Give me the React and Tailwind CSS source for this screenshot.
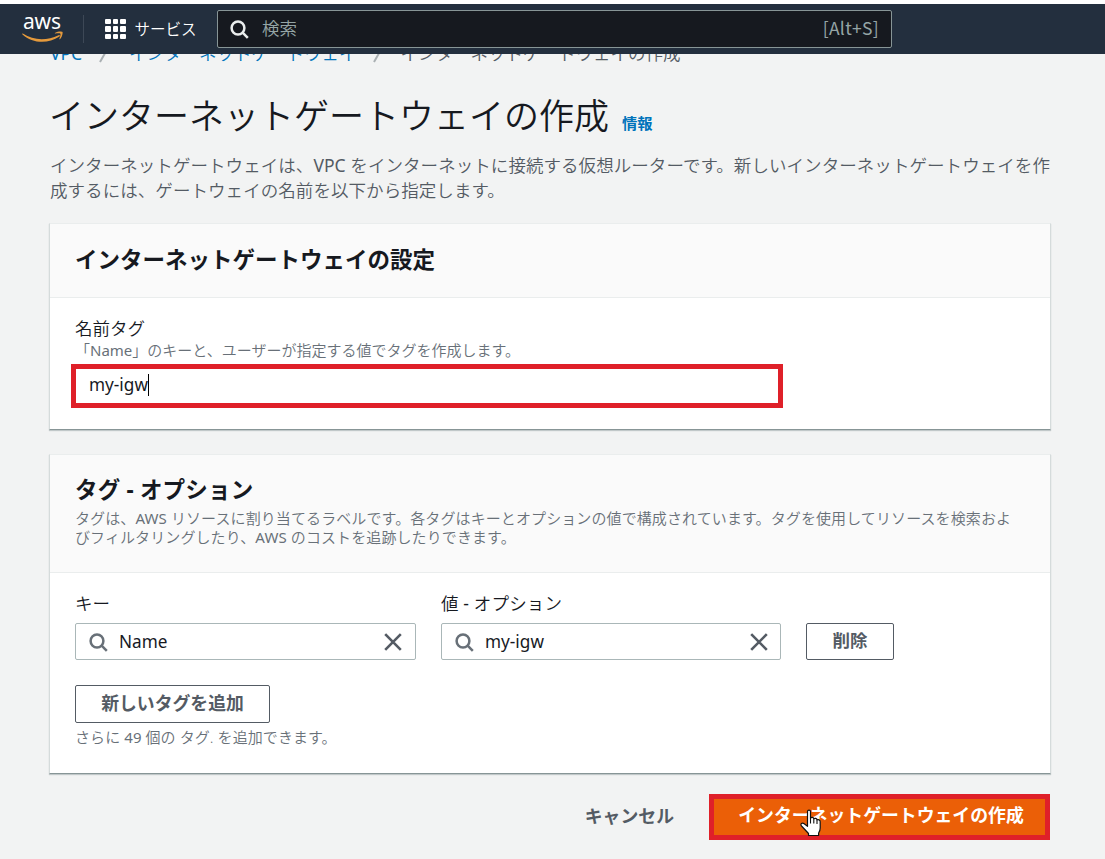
import React from "react";

function SearchIcon({ className }) {
  return (
    <svg className={className} width="19" height="19" viewBox="0 0 19 19" fill="none" stroke="currentColor" strokeWidth="2.5">
      <circle cx="8" cy="8" r="6.4" />
      <path d="M12.4 12.4L17.8 17.8" />
    </svg>
  );
}

function CloseIcon() {
  return (
    <svg className="text-[#545b64]" width="18" height="18" viewBox="0 0 18 18" fill="none" stroke="currentColor" strokeWidth="2.6">
      <path d="M1.2 1.2L16.8 16.8M16.8 1.2L1.2 16.8" />
    </svg>
  );
}

function AwsLogo() {
  return (
    <div className="relative mt-[8px] h-[32px] w-[42px]">
      <div className="h-[20px] pl-[1px] text-[21px] leading-[18px] font-normal tracking-[-0.2px] text-white">aws</div>
      <svg className="absolute top-[19px] left-0" width="42" height="13" viewBox="0 0 42 13" fill="none">
        <path d="M0.8 2.6C12 9.800 25 9.600 36.6 4.2C37.8 3.8 38.4 4.8 37.4 5.6C26 13.2 10.500 12.600 0.500 3.500C0 2.900 0.300 2.300 0.800 2.600Z" fill="#e59a3c" />
        <path d="M33 2C36 0.200 40 0.400 40.500 1.100C41 2.200 40 6.600 37.900 8.200C37.400 8.500 37.200 8.200 37.400 7.700C38.200 5.800 38.800 3.500 38.400 2.800C37.900 2.100 35.500 2.300 33.400 2.600C32.800 2.700 32.600 2.300 33 2Z" fill="#e59a3c" />
      </svg>
    </div>
  );
}

function GridIcon() {
  return (
    <div className="grid grid-cols-3 gap-[2px]">
      {Array.from({ length: 9 }, (_, i) => (
        <span key={i} className="size-[5.5px] rounded-[1px] bg-white" />
      ))}
    </div>
  );
}

function Nav() {
  return (
    <header className="flex h-[50px] bg-[#232f3e] text-white">
      <div className="flex w-[83px] pl-[22px]">
        <AwsLogo />
      </div>
      <div className="mt-[11px] h-[28px] w-px bg-[#3d4856]" />
      <div className="flex items-center pl-[21px]">
        <GridIcon />
        <span className="mt-px ml-[9px] w-[82.5px] text-[15.5px] font-[350] whitespace-nowrap">サービス</span>
      </div>
      <div className="mt-[6px] flex h-[38px] w-[675px] items-center rounded-[2px] border border-[#879596] bg-[#16191f] pr-[12px] pb-[2px] pl-[12px] text-[17.5px] text-[#95a5a6]">
        <SearchIcon className="mt-[2px] text-[#eaeded]" />
        <span className="ml-[13px] font-[350]">検索</span>
        <span className="ml-auto font-['Noto_Sans_CJK_JP',sans-serif] tracking-[0.3px]">[Alt+S]</span>
      </div>
    </header>
  );
}

function Slash({ className }) {
  return (
    <svg className={className} width="10" height="16" viewBox="0 0 10 16" fill="none" stroke="#aab0b3" strokeWidth="2">
      <path d="M9 1L1 15" />
    </svg>
  );
}

function Breadcrumbs() {
  return (
    <div className="h-[42px] overflow-hidden">
      <div className="mt-[-13px] flex h-[25px] items-center text-[17.5px] leading-[25px] font-[350] whitespace-nowrap text-[#0073bb]">
        <span className="w-[32px] font-normal">VPC</span>
        <Slash className="mt-[2px] mr-[20px] ml-[17px]" />
        <span>インターネットゲートウェイ</span>
        <Slash className="mt-[2px] mr-[18px] ml-[16px]" />
        <span className="text-[#545b64]">インターネットゲートウェイの作成</span>
      </div>
    </div>
  );
}

function Card({ header, children, className }) {
  return (
    <section className={"w-[1002px] border border-[#d5dbdb] border-t-[#eaeded] border-b-[#879596] bg-white shadow-[0_1px_1px_rgba(0,28,36,0.2)] " + className}>
      {header}
      {children}
    </section>
  );
}

function TagInput({ value, className }) {
  return (
    <div className={"flex h-[37px] items-center rounded-[2px] border border-[#aab7b8] bg-white pl-[13px] " + className}>
      <SearchIcon className="mt-px text-[#687078]" />
      <span className="ml-[11px] flex-1 text-[17.2px] text-[#16191f]">{value}</span>
      <CloseIcon />
    </div>
  );
}

function HandCursor() {
  return (
    <svg className="absolute top-[10px] left-[85px]" width="23" height="29" viewBox="0 0 23 29">
      <path
        d="M8.500 2.500C8.500 0.700 11.500 0.700 11.500 2.500V9.200C12.300 7.900 14.400 8.200 14.800 9.700C15.900 8.900 17.700 9.400 18 10.800C19.500 10.200 21.200 11 21.200 12.700V19C21.200 21.500 20.500 22.500 19.600 24V26.500H9.500V24.500L3 17.500C0.500 15 3 13.200 5.200 14.700L8.500 17.300Z"
        fill="white"
        stroke="#111"
        strokeWidth="1.2"
        strokeLinejoin="round"
      />
      <path d="M11.500 9V14.500M14.800 10V14.500M18 11V15" stroke="#111" strokeWidth="1.1" />
    </svg>
  );
}

function Latin({ children }) {
  return <span className="font-normal">{children}</span>;
}

export default function App() {
  return (
    <div className="h-[859px] w-[1105px] overflow-hidden bg-[#f2f3f3] font-['Noto_Sans','Noto_Sans_CJK_JP',sans-serif] text-[#16191f]">
      <div className="h-[4px] bg-white" />
      <Nav />
      <main className="pl-[50px]">
        <Breadcrumbs />
        <div className="flex h-[40px] items-center whitespace-nowrap">
          <h1 className="-ml-px w-[573px] text-[35px] leading-[40px] font-[350]">インターネットゲートウェイの作成</h1>
          <a className="mt-[13px] text-[15.3px] leading-[20px] font-bold text-[#0073bb]">情報</a>
        </div>
        <p className="mt-[17px] mb-[20px] text-[17.5px] leading-[25px] font-[350] tracking-[0.06px] whitespace-nowrap text-[#545b64]">
          インターネットゲートウェイは、<Latin>VPC</Latin> をインターネットに接続する仮想ルーターです。新しいインターネットゲートウェイを作
          <br />
          成するには、ゲートウェイの名前を以下から指定します。
        </p>

        <Card
          className="-ml-px h-[207px]"
          header={
            <div className="flex h-[74px] items-center border-b border-[#eaeded] bg-[#fafafa] pb-[2px] pl-[25px]">
              <h2 className="text-[22.5px] leading-[28px] font-bold">インターネットゲートウェイの設定</h2>
            </div>
          }
        >
          <div className="pt-[18px] pl-[25px]">
            <div className="text-[17.5px] leading-[24px] font-[350]">名前タグ</div>
            <div className="text-[15px] leading-[20px] font-[350] text-[#687078]">
              「<Latin>Name</Latin>」のキーと、ユーザーが指定する値でタグを作成します。
            </div>
            <div className="mt-[4px] -ml-[4px] flex h-[44px] w-[712px] items-center border-5 border-[#df2029] pb-[2px] pl-[13px]">
              <span className="text-[17.2px]">my-igw</span>
              <span className="h-[22px] w-px bg-black" />
            </div>
          </div>
        </Card>

        <Card
          className="mt-[24px] -ml-px h-[320px]"
          header={
            <div className="h-[118px] border-b border-[#eaeded] bg-[#fafafa] pt-[21px] pl-[25px]">
              <h2 className="text-[22.5px] leading-[28px] font-bold tracking-[0.2px]">タグ - オプション</h2>
              <p className="mt-[5px] text-[15px] leading-[19px] font-[350] tracking-[0.1px] whitespace-nowrap text-[#687078]">
                タグは、<Latin>AWS</Latin> リソースに割り当てるラベルです。各タグはキーとオプションの値で構成されています。タグを使用してリソースを検索およ
                <br />
                びフィルタリングしたり、<Latin>AWS</Latin> のコストを追跡したりできます。
              </p>
            </div>
          }
        >
          <div className="pt-[18px] pl-[25px]">
            <div className="flex items-end gap-[25px]">
              <div className="w-[341px]">
                <div className="mb-[8px] text-[17.5px] leading-[24px] font-[350]">キー</div>
                <TagInput value="Name" className="w-[341px] pr-[13px]" />
              </div>
              <div className="w-[340px]">
                <div className="mb-[8px] text-[17.5px] leading-[24px] font-[350] tracking-[0.15px]">
                  値 <Latin>-</Latin> オプション
                </div>
                <TagInput value="my-igw" className="w-[340px] pr-[12px]" />
              </div>
              <button className="h-[37px] w-[88px] rounded-[2px] border border-[#545b64] pb-[3px] text-[17.5px] leading-[24px] font-bold text-[#545b64]">削除</button>
            </div>
            <button className="mt-[25px] block h-[38px] w-[195px] rounded-[2px] border border-[#545b64] pb-[3px] text-[17.85px] leading-[24px] font-bold whitespace-nowrap text-[#545b64]">
              新しいタグを追加
            </button>
            <div className="mt-[4px] text-[15px] leading-[20px] font-[350] tracking-[0.08px] text-[#687078]">
              さらに <Latin>49</Latin> 個の タグ. を追加できます。
            </div>
          </div>
        </Card>

        <div className="mt-[20px] flex w-[1000px] items-center justify-end gap-[35px] text-[17.85px] font-bold">
          <span className="pb-[2px] text-[#545b64]">キャンセル</span>
          <button className="relative h-[46px] w-[341px] border-5 border-[#df2029] bg-[#eb5f07] pb-[3px] pl-[3px] whitespace-nowrap text-white">
            インターネットゲートウェイの作成
            <HandCursor />
          </button>
        </div>
      </main>
    </div>
  );
}
